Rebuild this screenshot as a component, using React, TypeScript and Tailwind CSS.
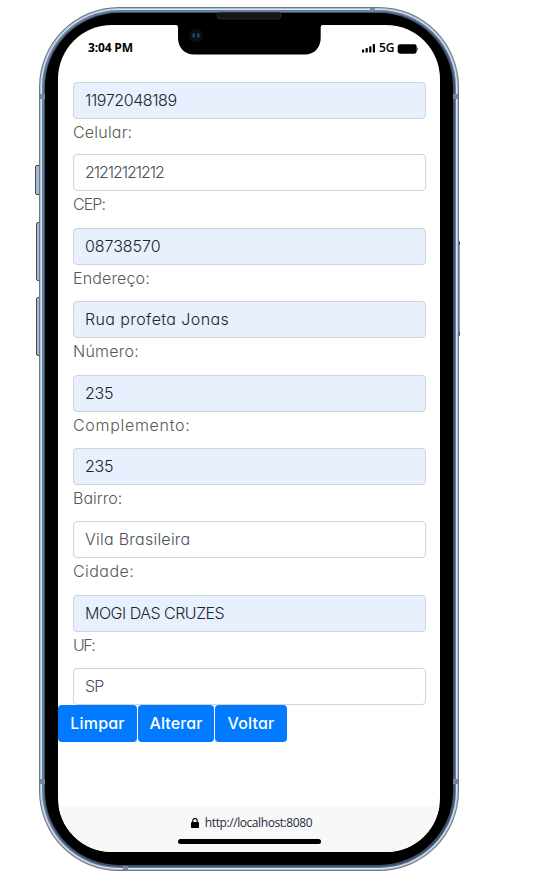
type Row = { value: string; track: string; filled?: boolean; label?: string; labelTrack?: string; gap?: string };

const rows: Row[] = [
  { value: "11972048189", track: "tracking-[-0.4px]", filled: true, label: "Celular:", labelTrack: "tracking-[0.2px]", gap: "h-[35px]" },
  { value: "21212121212", track: "tracking-[-1.05px]", label: "CEP:", labelTrack: "tracking-[-0.9px]", gap: "h-[37px]" },
  { value: "08738570", track: "tracking-[-0.05px]", filled: true, label: "Endereço:", labelTrack: "tracking-[0.15px]", gap: "h-[36px]" },
  { value: "Rua profeta Jonas", track: "tracking-[0.4px]", filled: true, label: "Número:", labelTrack: "tracking-[0.25px]", gap: "h-[37px]" },
  { value: "235", track: "tracking-[-0.2px]", filled: true, label: "Complemento:", labelTrack: "tracking-[0.7px]", gap: "h-[36px]" },
  { value: "235", track: "tracking-[-0.2px]", filled: true, label: "Bairro:", labelTrack: "tracking-[0px]", gap: "h-[36px]" },
  { value: "Vila Brasileira", track: "tracking-[0.25px]", label: "Cidade:", labelTrack: "tracking-[0.45px]", gap: "h-[37px]" },
  { value: "MOGI DAS CRUZES", track: "tracking-[-0.5px]", filled: true, label: "UF:", labelTrack: "tracking-[-1.5px]", gap: "h-[36px]" },
  { value: "SP", track: "tracking-[-0.8px]" },
];

function Field({ row }: { row: Row }) {
  return (
    <>
      <div
        className={
          "flex h-[37px] items-center rounded-[4px] border border-[#ced4da] pr-3 pb-px pl-[11px] text-base " +
          (row.filled ? "bg-[#e8f0fe] text-[#212529]" : "bg-white text-[#495057]")
        }
      >
        <span className={"whitespace-nowrap " + row.track}>{row.value}</span>
      </div>
      {row.label && (
        <div className={"text-base leading-[26px] whitespace-nowrap text-[#565a56] " + row.gap}>
          <span className={row.labelTrack}>{row.label}</span>
        </div>
      )}
    </>
  );
}

function StatusBar() {
  return (
    <div className="flex h-[57px] items-start justify-between pr-[21px] pl-[30px] font-['Open_Sans',sans-serif] text-[12px] leading-[16px] font-bold text-black">
      <span className="mt-[15px] tracking-[-0.15px]">3:04 PM</span>
      <div className="mt-[15px] flex items-center">
        <svg width="14" height="10" viewBox="0 0 14 10" className="mr-[3px] translate-y-px">
          <rect x="0" y="5.5" width="2.2" height="3" rx=".6" />
          <rect x="3.6" y="4.1" width="2.2" height="4.4" rx=".6" />
          <rect x="7.2" y="2.3" width="2.2" height="6.2" rx=".6" />
          <rect x="10.8" y="0.1" width="2.2" height="8.4" rx=".6" />
        </svg>
        <span className="w-[15px] font-semibold">5G</span>
        <svg width="22" height="10" viewBox="0 0 22 10" className="ml-[3px] translate-y-px">
          <rect x="0.7" y="0.3" width="19" height="9.4" rx="2.4" />
          <path d="M20.2 3.3Q22 5 20.2 6.7Z" />
        </svg>
      </div>
    </div>
  );
}

function SideButton({ place }: { place: string }) {
  return <div className={"absolute w-[5px] rounded-l-[2px] border border-[#3c485b] bg-[#a9b9d0] " + place} />;
}

export default function App() {
  return (
    <div className="h-[896px] w-[552px] overflow-hidden bg-white pt-[7px] pl-[39px] font-['Inter',sans-serif] font-light [font-feature-settings:'cv11']">
      <div className="relative h-[864px] w-[420px]">
        <SideButton place="top-[158px] -left-[4px] h-[30px]" />
        <SideButton place="top-[215px] -left-[3px] h-[59px]" />
        <SideButton place="top-[290px] -left-[3px] h-[59px]" />
        <div className="absolute top-[234px] -right-px h-[95px] w-[3px] rounded-r-[1px] border-y-4 border-[#3c485b] bg-[#8299b7]" />
        <div className="relative h-full w-full rounded-[80px] bg-[#6f7683] p-px">
          <div className="h-full rounded-[79px] bg-[#b3bfd3] p-px">
            <div className="h-full rounded-[78px] bg-[#dbe4f0] p-px">
              <div className="h-full rounded-[77px] bg-[#657f9f] p-[1.5px]">
                <div className="h-full rounded-[75px] bg-[#40536c] p-[1.5px]">
                  <div className="h-full rounded-[74px] bg-black px-[13px] pt-[12px] pb-[13px]">
                    <div className="flex h-[827px] w-[382px] flex-col overflow-hidden rounded-[54px] bg-white">
                      <StatusBar />
                      <div className="flex h-[623px] flex-col pr-[14px] pl-[15px]">
                        {rows.map((row, i) => (
                          <Field key={i} row={row} />
                        ))}
                      </div>
                      <div className="flex h-[101px] items-start text-base font-medium text-white">
                        <button className="mr-px h-[37px] w-[79px] rounded-[4px] bg-[#007bff] pb-px">
                          <span className="tracking-[0.2px]">Limpar</span>
                        </button>
                        <button className="mr-px h-[37px] w-[76px] rounded-[4px] bg-[#007bff] pb-px">
                          <span className="tracking-[0.1px]">Alterar</span>
                        </button>
                        <button className="h-[37px] w-[72px] rounded-[4px] bg-[#007bff] pb-px">
                          <span className="tracking-[0.2px]">Voltar</span>
                        </button>
                      </div>
                      <div className="flex h-[46px] flex-col items-center bg-[#f8f8f8]">
                        <div className="mt-[8px] flex h-[18px] items-center gap-[6px] pl-[5px] font-['Open_Sans',sans-serif] text-[12px] font-normal text-[#1f2b40]">
                          <svg width="8" height="10" viewBox="0 0 8 10">
                            <rect x="0" y="4" width="8" height="6" rx=".8" />
                            <path d="M1.8 4.5V2.7a2.2 2.2 0 0 1 4.4 0v1.8" fill="none" stroke="black" strokeWidth="1.2" />
                          </svg>
                          <span className="tracking-[-0.42px]">http://localhost:8080</span>
                        </div>
                        <div className="mt-[7px] h-[5px] w-[143px] rounded-full bg-black" />
                      </div>
                    </div>
                  </div>
                </div>
              </div>
            </div>
          </div>
        </div>
        <svg width="147" height="49" viewBox="0 0 147 49" className="absolute top-[5px] left-[137px]">
          <path d="M0 12.9C1.8 12.9 2 14.5 2 17V26C2 36 9 42.5 18 42.5H129C138 42.5 144.7 36 144.7 26V16C144.7 14 145 12.9 147 12.9V10H0Z" />
          <rect x="41" y="0.5" width="64" height="6.5" rx="3" fill="#151515" stroke="#292929" />
          <circle cx="20" cy="23.5" r="7" fill="#0c0e12" />
          <ellipse cx="17.7" cy="23.5" rx="1.3" ry="2.4" fill="#244f62" />
          <ellipse cx="22.3" cy="23.5" rx="1.4" ry="2.6" fill="#233b96" />
        </svg>
        <div className="absolute top-[87px] left-px h-[5px] w-[5px] bg-[#7784a3]" />
        <div className="absolute top-[87px] right-px h-[5px] w-[5px] bg-[#7784a3]" />
        <div className="absolute top-[772px] left-px h-[5px] w-[5px] bg-[#7784a3]" />
        <div className="absolute top-[772px] right-px h-[5px] w-[5px] bg-[#7784a3]" />
        <div className="absolute top-px right-[84px] h-[4px] w-[5px] bg-[#7784a3]" />
        <div className="absolute bottom-px left-[84px] h-[4px] w-[5px] bg-[#7784a3]" />
      </div>
    </div>
  );
}
